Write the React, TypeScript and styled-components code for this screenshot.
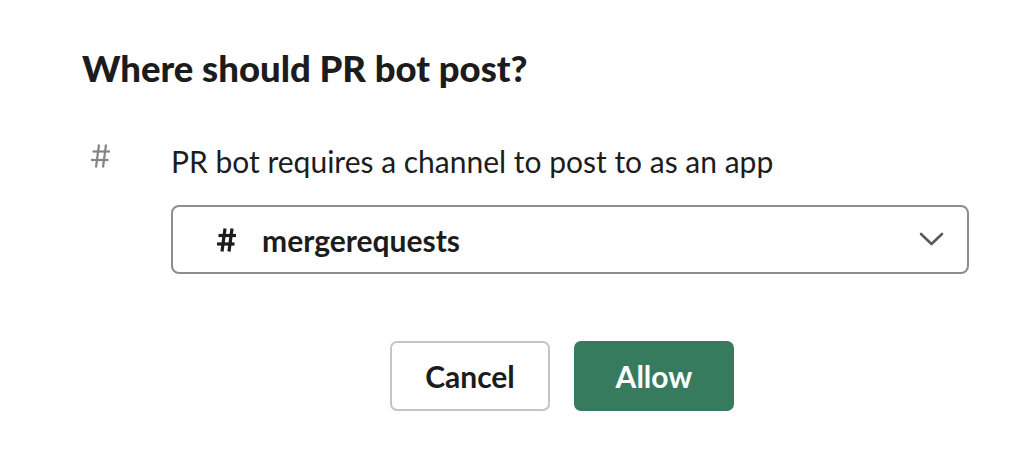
import styled, { createGlobalStyle } from 'styled-components'

const GlobalStyle = createGlobalStyle`
    html, body {
        margin: 0;
        padding: 0;
        background: #ffffff;
        font-family: Lato, "Noto Sans", sans-serif;
        color: #1d1c1d;
    }
`

const Page = styled.div`
    width: 1034px;
    height: 476px;
    box-sizing: border-box;
    padding: 46px 0 0 82px;
`

const Title = styled.h1`
    margin: 0;
    font-size: 36.5px;
    font-weight: 900;
    line-height: 44px;
`

const Section = styled.div`
    display: grid;
    grid-template-columns: 89px 798px;
    margin-top: 51px;
`

const SideIcon = styled.div`
    padding: 2px 0 0 8px;
`

const Body = styled.div`
    display: flex;
    flex-direction: column;
`

const Description = styled.p`
    margin: 0;
    font-size: 30px;
    line-height: 40px;
`

const Select = styled.div`
    margin-top: 24px;
    height: 69px;
    box-sizing: border-box;
    border: 2px solid #8d8d8d;
    border-radius: 8px;
    display: flex;
    align-items: center;
    padding: 0 23px 0 43px;
    gap: 25px;
`

const Channel = styled.span`
    flex: 1;
    font-size: 30px;
    font-weight: 700;
`

const Actions = styled.div`
    display: flex;
    gap: 24px;
    margin-top: 67px;
    padding-left: 308px;
`

const Button = styled.button<{ $primary?: boolean }>`
    width: 160px;
    height: 70px;
    box-sizing: border-box;
    border-radius: 7px;
    font-family: Lato, "Noto Sans", sans-serif;
    font-size: 30px;
    font-weight: 700;
    cursor: pointer;
    border: 2px solid ${p => p.$primary ? '#367b5d' : '#c4c4c4'};
    background: ${p => p.$primary ? '#367b5d' : '#ffffff'};
    color: ${p => p.$primary ? '#ffffff' : '#1d1c1d'};
`

function HashIcon({ color, weight }: { color: string, weight: number }) {
    return (
        <svg width="21" height="26" viewBox="0 0 21 26" fill="none" style={{ display: 'block' }}>
            <g stroke={color} strokeWidth={weight} strokeLinecap="butt">
                <path d="M9 1.5 L6 24.5" />
                <path d="M16 1.5 L13 24.5" />
                <path d="M2.5 8.5 L20 8.5" />
                <path d="M1 17 L18.5 17" />
            </g>
        </svg>
    )
}

function Chevron() {
    return (
        <svg width="25" height="15" viewBox="0 0 25 15" fill="none">
            <path d="M2 2 L12.5 12 L23 2" stroke="#5a5a5a" strokeWidth="2.6" strokeLinecap="round" strokeLinejoin="round" />
        </svg>
    )
}

export default function App() {
    return (
        <>
            <GlobalStyle />
            <Page>
                <Title>Where should PR bot post?</Title>
                <Section>
                    <SideIcon>
                        <HashIcon color="#858585" weight={2.2} />
                    </SideIcon>
                    <Body>
                        <Description>PR bot requires a channel to post to as an app</Description>
                        <Select>
                            <HashIcon color="#1d1c1d" weight={3.2} />
                            <Channel>mergerequests</Channel>
                            <Chevron />
                        </Select>
                    </Body>
                </Section>
                <Actions>
                    <Button>Cancel</Button>
                    <Button $primary>Allow</Button>
                </Actions>
            </Page>
        </>
    )
}
